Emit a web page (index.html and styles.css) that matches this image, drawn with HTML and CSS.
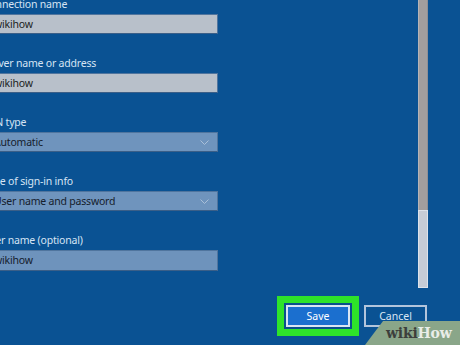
FILE: index.html
```html
<!DOCTYPE html>
<html>
    <head>
        <meta name="viewport" content="width=device-width, initial-scale=1">
        <link rel="stylesheet" href="styles.css">
    </head>
<body>
    <div class="main">
        <div class="form">
            <div class="group">
                <p class="label">Connection name</p>
                <div class="field light">wikihow</div>
            </div>
            <div class="group">
                <p class="label">Server name or address</p>
                <div class="field light">wikihow</div>
            </div>
            <div class="group">
                <p class="label">VPN type</p>
                <div class="field select"><span>Automatic</span>
                    <svg width="9" height="5" viewBox="0 0 9 5"><polyline points="0.5,0.5 4.5,4.5 8.5,0.5" fill="none" stroke="#a9bfd8" stroke-width="1"/></svg>
                </div>
            </div>
            <div class="group">
                <p class="label">Type of sign-in info</p>
                <div class="field select"><span>User name and password</span>
                    <svg width="9" height="5" viewBox="0 0 9 5"><polyline points="0.5,0.5 4.5,4.5 8.5,0.5" fill="none" stroke="#a9bfd8" stroke-width="1"/></svg>
                </div>
            </div>
            <div class="group">
                <p class="label">User name (optional)</p>
                <div class="field dim">wikihow</div>
            </div>
        </div>
        <div class="spacer"></div>
        <div class="scrollbar">
            <div class="track"></div>
            <div class="thumb"></div>
        </div>
    </div>
    <div class="buttons">
        <div class="highlight">
            <button class="btn save">Save</button>
        </div>
        <button class="btn cancel">Cancel</button>
    </div>
    <div class="watermark"><b class="wiki">wiki</b><b class="how">How</b></div>
</body>
</html>
```

FILE: styles.css
```css
/* Page */
html, body {
    margin: 0;
    padding: 0;
}
body {
    width: 460px;
    height: 345px;
    overflow: hidden;
    position: relative;
    background-color: #0a5293;
    font-family: "Noto Sans", "Open Sans", sans-serif;
    font-size: 10.5px;
    letter-spacing: -0.2px;
}

.main {
    display: flex;
    height: 296px;
}

/* Form column, cut off on the left */
.form {
    margin-left: -17px;
    margin-top: -3px;
    width: 235px;
}
.group {
    margin-bottom: 22px;
}
.label {
    margin: 0 0 3px 0;
    line-height: 14px;
    color: #d6e4f4;
}
.field {
    box-sizing: border-box;
    height: 20px;
    line-height: 18px;
    padding: 0 8px 0 10px;
    border: 1px solid #50759e;
    border-bottom-color: #3b5f88;
    color: #15202c;
}
.light {
    background-color: #b8c0ca;
    color: #1b1e22;
}
.select {
    background-color: #6f94bd;
    display: flex;
    align-items: center;
    justify-content: space-between;
}
.dim {
    background-color: #6e93bc;
    height: 21px;
}

.spacer {
    flex: 1;
}

/* Scrollbar */
.scrollbar {
    width: 10px;
    margin-right: 32px;
    height: 288px;
    display: flex;
    flex-direction: column;
}
.track {
    height: 210px;
    background-color: #a29e9e;
    border-left: 1px solid #b7b4b6;
    border-right: 1px solid #8e8f96;
}
.thumb {
    flex: 1;
    background-color: #c6ccd6;
    border: 1px solid #dde2ea;
}

/* Buttons */
.buttons {
    display: flex;
    justify-content: flex-end;
    align-items: flex-start;
    gap: 5px;
    margin-right: 33px;
}
.highlight {
    border: 7px solid #2ee32a;
    padding: 2px;
    background-color: #0a4f8c;
}
.btn {
    box-sizing: border-box;
    height: 22px;
    width: 64px;
    margin: 0;
    padding: 0;
    font-family: "Noto Sans", "Open Sans", sans-serif;
    font-size: 10.5px;
    border-radius: 0;
}
.save {
    background-color: #1b6fcf;
    border: 2px solid #d9e5f4;
    color: #ffffff;
}
.cancel {
    margin-top: 9px;
    background-color: transparent;
    border: 2px solid #b3c5dc;
    color: #dbe6f3;
    width: 63px;
}

/* wikiHow watermark */
.watermark {
    position: absolute;
    right: 0;
    bottom: 0;
    width: 95px;
    height: 24px;
    background-color: #8aa689;
    clip-path: polygon(19% 0, 100% 0, 100% 100%, 0 100%);
    font-family: "DejaVu Serif", "Liberation Serif", serif;
    font-size: 14px;
    line-height: 24px;
    padding-left: 21px;
    box-sizing: border-box;
}
.wiki {
    color: #3c3f3c;
}
.how {
    color: #e9ede8;
}
```
